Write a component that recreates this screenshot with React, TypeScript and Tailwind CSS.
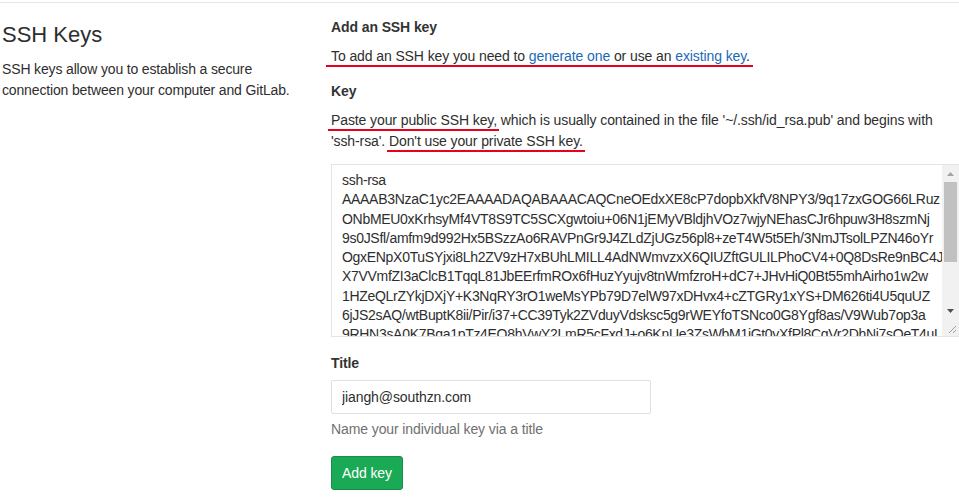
const keyLines = [
  "ssh-rsa",
  "AAAAB3NzaC1yc2EAAAADAQABAAACAQCneOEdxXE8cP7dopbXkfV8NPY3/9q17zxGOG66LRuz",
  "ONbMEU0xKrhsyMf4VT8S9TC5SCXgwtoiu+06N1jEMyVBldjhVOz7wjyNEhasCJr6hpuw3H8szmNj",
  "9s0JSfl/amfm9d992Hx5BSzzAo6RAVPnGr9J4ZLdZjUGz56pl8+zeT4W5t5Eh/3NmJTsolLPZN46oYr",
  "OgxENpX0TuSYjxi8Lh2ZV9zH7xBUhLMILL4AdNWmvzxX6QIUZftGULILPhoCV4+0Q8DsRe9nBC4J",
  "X7VVmfZI3aClcB1TqqL81JbEErfmROx6fHuzYyujv8tnWmfzroH+dC7+JHvHiQ0Bt55mhAirho1w2w",
  "1HZeQLrZYkjDXjY+K3NqRY3rO1weMsYPb79D7elW97xDHvx4+cZTGRy1xYS+DM626ti4U5quUZ",
  "6jJS2sAQ/wtBuptK8ii/Pir/i37+CC39Tyk2ZVduyVdsksc5g9rWEYfoTSNco0G8Ygf8as/V9Wub7op3a",
  "9RHN3sA0K7Bqa1pTz4EQ8hVwY2LmR5cFxdJ+o6KnUe3ZsWbM1iGt0yXfPl8CqVr2DhNj7sQeT4uLAB",
];

// red hand-drawn annotation under a phrase
const Mark = ({ children, l = -4, r = -4, b = -3 }: any) => (
  <span className="relative">
    {children}
    <span
      className="absolute h-[2px] bg-[#e8001c]"
      style={{ left: l, right: r, bottom: b }}
    />
  </span>
);

const App = () => {
  return (
    <div className="min-h-screen bg-white text-[14px] leading-[21px] text-[#2e2e2e] font-['Liberation_Sans',Arial,sans-serif]">
      <div className="mt-[2px] flex border-t border-[#e5e5e5]">
        {/* left column */}
        <div className="w-[331px] shrink-0 pl-[2px] pt-[17px]">
          <h4 className="text-[22px] leading-[30px] text-[#2e2e2e]">SSH Keys</h4>
          <p className="mt-[9px] pr-[14px] tracking-[-0.15px]">
            SSH keys allow you to establish a secure connection between your computer and GitLab.
          </p>
        </div>

        {/* right column */}
        <div className="min-w-0 flex-1 pt-[14px] tracking-[-0.1px]">
          <h5 className="font-bold text-[#333]">Add an SSH key</h5>
          <p className="mt-[8px]">
            <Mark l={-5} r={-3}>
              To add an SSH key you need to{" "}
              <a className="text-[#1b69b6]">generate one</a> or use an{" "}
              <a className="text-[#1b69b6]">existing key</a>.
            </Mark>
          </p>

          <div className="mt-[14px] font-bold text-[#333]">Key</div>
          <p className="mt-[8px] pr-[20px]">
            <Mark l={-3} r={-2}>Paste your public SSH key,</Mark> which is usually contained
            in the file '~/.ssh/id_rsa.pub' and begins with 'ssh-rsa'.{" "}
            <Mark l={-2} r={-2}>Don't use your private SSH key.</Mark>
          </p>

          <div className="mt-[12px] flex h-[173px] border border-r-0 border-[#e5e5e5]">
            <div className="min-w-0 flex-1 overflow-hidden pl-[10px] pt-[6px] text-[14px] leading-[19.3px] tracking-[-0.3px]">
              {keyLines.map((line) => (
                <div key={line} className="whitespace-nowrap">
                  {line}
                </div>
              ))}
            </div>
            {/* scrollbar */}
            <div className="flex w-[17px] shrink-0 flex-col bg-[#f1f1f1]">
              <div className="flex h-[17px] items-center justify-center">
                <svg width="7" height="4" viewBox="0 0 7 4">
                  <path d="M0 4 L3.5 0 L7 4 Z" fill="#a3a3a3" />
                </svg>
              </div>
              <div className="mx-[2px] h-[80px] bg-[#c1c1c1]" />
              <div className="flex-1" />
              <div className="flex h-[17px] items-center justify-center">
                <svg width="7" height="4" viewBox="0 0 7 4">
                  <path d="M0 0 L7 0 L3.5 4 Z" fill="#505050" />
                </svg>
              </div>
              <div className="flex h-[17px] items-end justify-end pb-[2px] pr-[2px]">
                <svg width="9" height="9" viewBox="0 0 9 9">
                  <path d="M8 1 L1 8 M8 5 L5 8" stroke="#9a9a9a" strokeWidth="1" />
                </svg>
              </div>
            </div>
          </div>

          <div className="mt-[16px] font-bold text-[#333]">Title</div>
          <input
            className="mt-[6px] h-[34px] w-[320px] rounded-[2px] border border-[#dfdfdf] px-[10px] text-[14px] text-[#2e2e2e] outline-none"
            defaultValue="jiangh@southzn.com"
          />
          <p className="mt-[5px] text-[#707070]">Name your individual key via a title</p>
          <button className="mt-[16px] h-[34px] rounded-[3px] border border-[#168f48] bg-[#1aaa55] px-[10px] text-[14px] text-white">
            Add key
          </button>
        </div>
      </div>
    </div>
  );
};

export default App;
